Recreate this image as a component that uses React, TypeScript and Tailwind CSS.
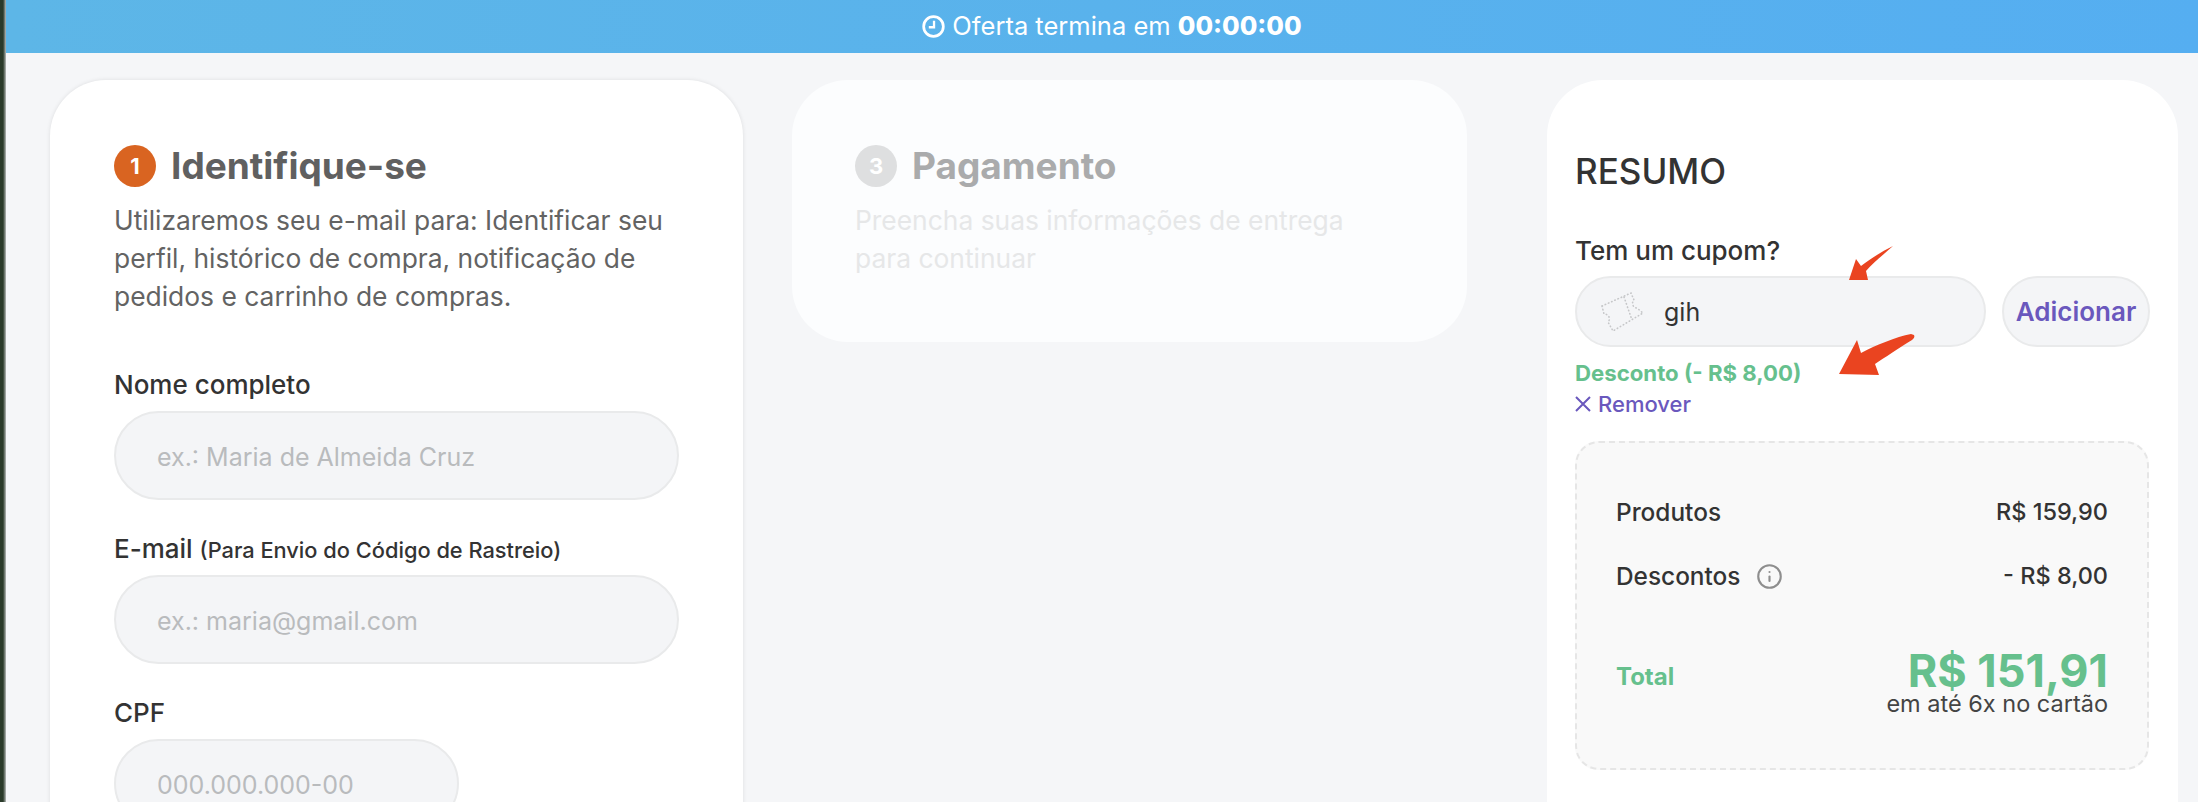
import { Info } from "lucide-react";

type FieldProps = {
  label: React.ReactNode;
  placeholder: string;
  className: string;
};

function Field({ label, placeholder, className }: FieldProps) {
  return (
    <div className="flex flex-col">
      <label className="h-[30px] text-[26px] leading-[30px] font-medium text-[#333]">{label}</label>
      <input
        placeholder={placeholder}
        className={`mt-[11px] h-[89px] rounded-full border-2 border-[#e9eaeb] bg-[#f4f5f7] pt-[2px] pl-[41px] text-[25px] outline-none placeholder:text-[#b9bbbd] ${className}`}
      />
    </div>
  );
}

function StepTitle({ step, title, dim }: { step: number; title: string; dim?: boolean }) {
  return (
    <div className="flex items-center gap-[15px]">
      <span
        className={`flex h-[42px] w-[42px] items-center justify-center rounded-full text-[22px] font-bold text-white ${
          dim ? "bg-[#dedfe0]" : "bg-[#d96421]"
        }`}
      >
        {step}
      </span>
      <h2 className={`text-[37px] leading-[42px] font-bold ${dim ? "text-[#aaabac]" : "text-[#606060]"}`}>{title}</h2>
    </div>
  );
}

function Clock() {
  return (
    <svg width="23" height="23" viewBox="0 0 22 22" fill="none" stroke="white" strokeWidth="2.6">
      <circle cx="11" cy="11" r="9.4" />
      <path d="M11.5 5.5v6.2H6.5" strokeWidth="2.2" />
    </svg>
  );
}

function CouponIcon() {
  return (
    <svg width="46" height="42" viewBox="0 0 46 42" fill="none" stroke="#c6c7c9" strokeWidth="1.6" strokeDasharray="0.5 3" strokeLinecap="round">
      <path d="M3 15 L32 2 L35 9 C32 12 34 17 38 17 L44 22 L14 40 L9 31 C12 28 10 23 5 23 Z" />
      <path d="M25 6 L33 29" />
    </svg>
  );
}

export default function App() {
  return (
    <div className="flex h-[802px] w-[2198px] overflow-hidden bg-[#f5f6f8] font-['Inter',sans-serif]">
      <div className="w-[6px] shrink-0 bg-gradient-to-r from-[#2a3a2a] via-[#2a3a2a] to-[#b9bcbc]" />
      <div className="flex min-w-0 flex-1 flex-col">
        <div className="flex h-[53px] shrink-0 items-center justify-center gap-[7px] bg-gradient-to-r from-[#5db6e7] to-[#55aef1] pl-[20px] text-[25.5px] text-white">
          <Clock />
          <span>
            Oferta termina em <strong className="font-extrabold">00:00:00</strong>
          </span>
        </div>

        <div className="flex items-start pt-[27px] pl-[44px]">
          <section className="h-[800px] w-[693px] shrink-0 rounded-[56px] bg-white px-[64px] pt-[65px] shadow-[0_0_4px_rgba(0,0,0,0.1)]">
            <StepTitle step={1} title="Identifique-se" />
            <p className="mt-[14px] w-[565px] text-[26.4px] leading-[38px] text-[#636363]">
              Utilizaremos seu e-mail para: Identificar seu perfil, histórico de compra, notificação de pedidos e carrinho de compras.
            </p>
            <div className="mt-[55px] flex flex-col gap-[34px]">
              <Field label="Nome completo" placeholder="ex.: Maria de Almeida Cruz" className="w-[565px]" />
              <Field
                label={
                  <>
                    E-mail <span className="text-[21.8px]">(Para Envio do Código de Rastreio)</span>
                  </>
                }
                placeholder="ex.: maria@gmail.com"
                className="w-[565px]"
              />
              <Field label="CPF" placeholder="000.000.000-00" className="w-[345px]" />
            </div>
          </section>

          <section className="ml-[49px] h-[262px] w-[675px] shrink-0 rounded-[56px] bg-[#fcfdfe] px-[63px] pt-[65px]">
            <StepTitle step={3} title="Pagamento" dim />
            <p className="mt-[14px] w-[520px] text-[26.4px] leading-[38px] text-[#e6e7e8]">
              Preencha suas informações de entrega para continuar
            </p>
          </section>

          <section className="relative ml-[80px] h-[800px] w-[631px] shrink-0 rounded-[56px] bg-white px-[28px] pt-[70px]">
            <h2 className="text-[35px] leading-[42px] font-medium text-[#333]">RESUMO</h2>
            <p className="mt-[44px] text-[26px] leading-[30px] font-medium text-[#333]">Tem um cupom?</p>
            <div className="mt-[10px] flex gap-[16px]">
              <div className="flex h-[71px] w-[411px] items-center gap-[19px] rounded-full border-2 border-[#e9eaeb] bg-[#f4f5f7] pl-[22px]">
                <CouponIcon />
                <span className="pt-[2px] text-[25px] text-[#333]">gih</span>
              </div>
              <button className="h-[71px] w-[148px] rounded-full border-2 border-[#e9eaeb] bg-[#f4f5f7] text-[26px] font-semibold text-[#6a58bd]">
                Adicionar
              </button>
            </div>
            <p className="mt-[13px] text-[22.2px] leading-[26px] font-bold text-[#66c08d]">Desconto (- R$ 8,00)</p>
            <p className="mt-[5px] flex items-center gap-[7px] text-[22px] leading-[26px] font-medium text-[#6a58bd]">
              <svg width="16" height="16" viewBox="0 0 16 16" fill="none" stroke="currentColor" strokeWidth="2">
                <path d="M1 1L15 15M15 1L1 15" />
              </svg>
              Remover
            </p>

            <div className="mt-[24px] h-[329px] w-[574px] rounded-[24px] border-2 border-dashed border-[#e6e6e6] bg-[#f9f9f9] px-[39px] pt-[54px]">
              <div className="flex h-[30px] items-center justify-between text-[24.4px] font-medium text-[#333]">
                <span>Produtos</span>
                <span className="text-[23.5px]">R$ 159,90</span>
              </div>
              <div className="mt-[34px] flex h-[30px] items-center justify-between text-[24.4px] font-medium text-[#333]">
                <span className="flex items-center gap-[16px]">
                  Descontos
                  <Info size={27} strokeWidth={1.9} className="text-[#8e8e8e]" />
                </span>
                <span className="text-[23.5px]">- R$ 8,00</span>
              </div>
              <div className="mt-[57px] flex items-start justify-between">
                <span className="mt-[11px] text-[24px] leading-[36px] font-bold text-[#66c08d]">Total</span>
                <div className="flex flex-col items-end">
                  <span className="text-[45px] leading-[46px] font-bold text-[#66c08d]">R$ 151,91</span>
                  <span className="text-[23.5px] leading-[20px] text-[#444]">em até 6x no cartão</span>
                </div>
              </div>
            </div>

            <svg className="absolute top-[166px] left-[301px]" width="46" height="36" viewBox="0 0 46 36" fill="#ea4420">
              <path d="M45 0 C35 9 25 17 18 25 L20 34 L1 34 L8 13 L13 20 C22 13 33 6 45 0 Z" />
            </svg>
            <svg className="absolute top-[254px] left-[292px]" width="76" height="42" viewBox="0 0 76 42" fill="#ea4420">
              <path d="M75 1 C76 3 75 4 73 6 C60 14 45 24 36 30 L40 41 L0 40 L18 6 L22 19 C37 11 57 3 72 0 Z" />
            </svg>
          </section>
        </div>
      </div>
    </div>
  );
}
